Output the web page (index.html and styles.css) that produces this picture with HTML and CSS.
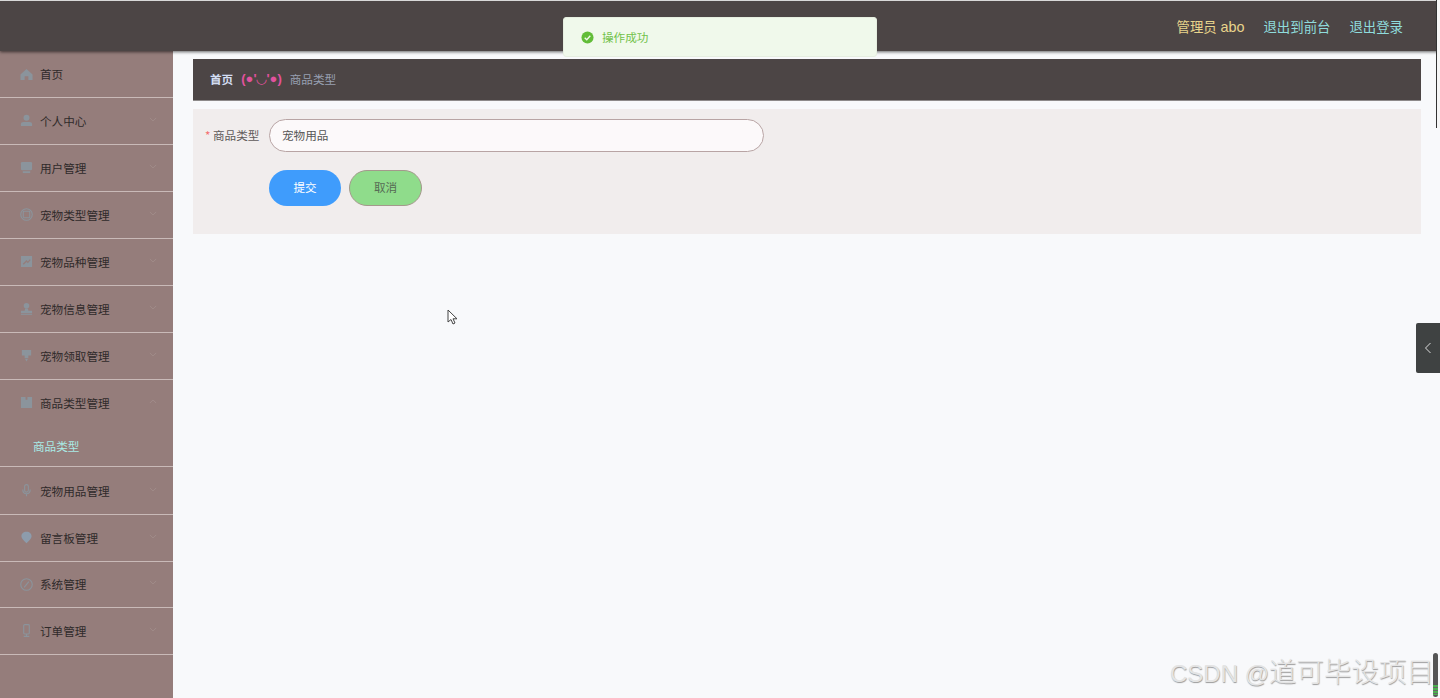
FILE: index.html
```html
<!DOCTYPE html>
<html lang="zh-CN">
<head>
    <meta charset="UTF-8" />
    <title>商品类型</title>
    <link rel="stylesheet" href="styles.css">
</head>
<body>

    <header class="topbar">
        <span class="admin">管理员 <b>abo</b></span>
        <a class="toplink">退出到前台</a>
        <a class="toplink">退出登录</a>
    </header>

    <div class="main">
        <nav class="sidebar">
            <div class="menu-item">
                <svg class="icon" viewBox="0 0 14 14"><path d="M7 1 L13.5 7 V13 H9 V9 H5 V13 H.5 V7 Z"/></svg>
                <span>首页</span>
            </div>
            <div class="menu-item">
                <svg class="icon" viewBox="0 0 14 14"><circle cx="7" cy="4" r="3.2"/><path d="M1 13 V11 Q1 8.500 4 8.500 H10 Q13 8.500 13 11 V13 Z"/></svg>
                <span>个人中心</span>
                <svg class="arrow" viewBox="0 0 10 6"><path d="M1 1 L5 5 L9 1"/></svg>
            </div>
            <div class="menu-item">
                <svg class="icon" viewBox="0 0 14 14"><rect x="1" y="1" width="12" height="9" rx="1.500"/><path d="M3 11 H11 V13 H3 Z"/></svg>
                <span>用户管理</span>
                <svg class="arrow" viewBox="0 0 10 6"><path d="M1 1 L5 5 L9 1"/></svg>
            </div>
            <div class="menu-item">
                <svg class="icon icon-line" viewBox="0 0 14 14"><circle cx="7" cy="7" r="6.200"/><rect x="3.500" y="3.500" width="7" height="7" rx="1"/></svg>
                <span>宠物类型管理</span>
                <svg class="arrow" viewBox="0 0 10 6"><path d="M1 1 L5 5 L9 1"/></svg>
            </div>
            <div class="menu-item">
                <svg class="icon" viewBox="0 0 14 14"><path d="M1 1 H13 V13 H1 Z M3 9.500 L4 10.500 L7 7.500 L8.500 9 L11.500 5.500 L10.500 4.500 L8.500 7 L7 5.500 Z" fill-rule="evenodd"/></svg>
                <span>宠物品种管理</span>
                <svg class="arrow" viewBox="0 0 10 6"><path d="M1 1 L5 5 L9 1"/></svg>
            </div>
            <div class="menu-item">
                <svg class="icon" viewBox="0 0 14 14"><circle cx="7" cy="4" r="3"/><path d="M5.500 7 H8.500 L9 9.500 H13 V12 H1 V9.500 H5 Z"/><path d="M1 12.800 H13 V13.800 H1 Z"/></svg>
                <span>宠物信息管理</span>
                <svg class="arrow" viewBox="0 0 10 6"><path d="M1 1 L5 5 L9 1"/></svg>
            </div>
            <div class="menu-item">
                <svg class="icon" viewBox="0 0 14 14"><path d="M2 1 H12 V7 H9 V10 H5 V7 H2 Z"/><path d="M5.500 10.800 H8.500 L7 13.500 Z"/></svg>
                <span>宠物领取管理</span>
                <svg class="arrow" viewBox="0 0 10 6"><path d="M1 1 L5 5 L9 1"/></svg>
            </div>
            <div class="menu-item">
                <svg class="icon" viewBox="0 0 14 14"><path d="M1 1 H6 V4 H8 V1 H13 V13 H1 Z"/></svg>
                <span>商品类型管理</span>
                <svg class="arrow" viewBox="0 0 10 6"><path d="M1 5 L5 1 L9 5"/></svg>
            </div>
            <div class="submenu">
                <span>商品类型</span>
            </div>
            <div class="menu-item">
                <svg class="icon icon-line" viewBox="0 0 14 14"><rect x="5" y=".7" width="4" height="8" rx="2"/><path d="M3 6 Q3 10.500 7 10.500 Q11 10.500 11 6 M7 10.500 V13.300"/></svg>
                <span>宠物用品管理</span>
                <svg class="arrow" viewBox="0 0 10 6"><path d="M1 1 L5 5 L9 1"/></svg>
            </div>
            <div class="menu-item">
                <svg class="icon icon-blue" viewBox="0 0 14 14"><path d="M7 .7 C10.500 .7 12.500 3 12.500 5.700 C12.500 8.500 9.500 10.500 7 13.300 C4.500 10.500 1.500 8.500 1.500 5.700 C1.500 3 3.500 .7 7 .7 Z"/></svg>
                <span>留言板管理</span>
                <svg class="arrow" viewBox="0 0 10 6"><path d="M1 1 L5 5 L9 1"/></svg>
            </div>
            <div class="menu-item">
                <svg class="icon icon-line" viewBox="0 0 14 14"><circle cx="7" cy="7" r="6.200"/><path d="M4.500 10 L9.500 4"/></svg>
                <span>系统管理</span>
                <svg class="arrow" viewBox="0 0 10 6"><path d="M1 1 L5 5 L9 1"/></svg>
            </div>
            <div class="menu-item">
                <svg class="icon icon-line" viewBox="0 0 14 14"><rect x="4" y=".7" width="6" height="10" rx="1"/><path d="M7 10.700 V13.300 M4 13.300 H10"/></svg>
                <span>订单管理</span>
                <svg class="arrow" viewBox="0 0 10 6"><path d="M1 1 L5 5 L9 1"/></svg>
            </div>
        </nav>

        <main class="content">
            <div class="breadcrumb">
                <span class="crumb-home">首页</span>
                <span class="crumb-sep">(●'◡'●)</span>
                <span class="crumb-page">商品类型</span>
            </div>
            <form class="panel">
                <div class="form-row">
                    <label class="form-label"><i>*</i> 商品类型</label>
                    <div class="form-input">宠物用品</div>
                </div>
                <div class="form-actions">
                    <button type="button" class="btn btn-submit">提交</button>
                    <button type="button" class="btn btn-cancel">取消</button>
                </div>
            </form>
        </main>
    </div>

    <!-- 提示 -->
    <div class="toast">
        <svg class="toast-icon" viewBox="0 0 14 14"><circle cx="7" cy="7" r="6.500"/><path d="M4 7.200 L6.200 9.300 L10 5.200"/></svg>
        <span>操作成功</span>
    </div>

    <div class="side-tab">
        <svg viewBox="0 0 8 12"><path d="M6.500 1 L1.500 6 L6.500 11"/></svg>
    </div>

    <svg class="cursor" viewBox="0 0 12 17"><path d="M1 1 V13 L4 10.500 L6 15 L8 14 L6 9.800 H10 Z"/></svg>

    <div class="watermark">CSDN @<span>道可毕设项目</span></div>
    <div class="page-scroll"></div>
    <div class="scroll-thumb"></div>

</body>
</html>
```

FILE: styles.css
```css
* {
    box-sizing: border-box;
    margin: 0;
    padding: 0;
}

html,
body {
    height: 698px;
    overflow: hidden;
}

body {
    display: flex;
    flex-direction: column;
    background: #f8f9fb;
    font-family: "Noto Sans CJK SC", "Liberation Sans", sans-serif;
    font-size: 11.6px;
    color: #555;
    border-top: 1px solid #d8d8d8;
}

.topbar {
    display: flex;
    align-items: center;
    justify-content: flex-end;
    gap: 19px;
    flex-shrink: 0;
    height: 50px;
    padding-right: 37px;
    background: #4c4545;
    box-shadow: 0 1px 3px #0009;
    font-size: 13.4px;
    position: relative;
    z-index: 2;
}

.admin {
    color: #e8d48c;
    font-family: "Liberation Sans", "Noto Sans CJK SC", sans-serif;
}

.admin b {
    font-size: 14.4px;
    font-weight: 400;
}

.toplink {
    color: #8fdcdc;
}

.main {
    display: flex;
    flex: 1;
    min-height: 0;
}

.sidebar {
    flex-shrink: 0;
    width: 173px;
    padding-top: 1px;
    background: #957d7b;
    color: #2f2a2a;
}

.menu-item {
    display: flex;
    align-items: center;
    height: 47px;
    padding: 0 0 1px 20px;
    border-bottom: 1px solid #c9bab8;
}

.menu-item span {
    margin-left: 7px;
    flex: 1;
}

.menu-item:first-child {
    height: 46px;
}

.menu-item:nth-child(8) {
    height: 46px;
    border-bottom: none;
}

.menu-item:nth-child(10) {
    height: 48px;
    padding-bottom: 0;
}

.menu-item:nth-child(12) {
    height: 46px;
}

.icon {
    width: 13px;
    height: 13px;
    flex-shrink: 0;
    fill: #8b949c;
}

.icon-line {
    fill: none;
    stroke: #8b949c;
    stroke-width: 1.2;
}

.icon-blue {
    fill: #8d9cac;
}

.arrow {
    width: 8px;
    height: 5px;
    margin-right: 16px;
    margin-top: -3px;
    fill: none;
    stroke: #a38f8d;
    stroke-width: 1;
}

.submenu {
    display: flex;
    align-items: center;
    height: 41px;
    padding-left: 33px;
    padding-bottom: 1px;
    border-bottom: 1px solid #c9bab8;
    color: #a9ebe6;
}

.content {
    flex: 1;
    padding: 8px 19px 0 20px;
}

.breadcrumb {
    display: flex;
    align-items: center;
    height: 42px;
    padding: 0 0 2px 17px;
    background: #4c4545;
    border-bottom: 1px solid #8d8a8a;
}

.crumb-home {
    color: #d3ddf2;
    font-weight: 700;
}

.crumb-sep {
    margin-left: 8px;
    color: #e2529e;
    font-family: "Liberation Sans", "DejaVu Sans", sans-serif;
    font-weight: 700;
    font-size: 13px;
}

.crumb-page {
    margin-left: 8px;
    color: #98a0b2;
}

.panel {
    height: 125px;
    margin-top: 8px;
    padding: 10px 0 0 12px;
    background: #f1eded;
}

.form-row {
    display: flex;
    align-items: center;
}

.form-label {
    width: 64px;
    padding-bottom: 2px;
    color: #5f5a5a;
}

.form-label i {
    color: #f56c6c;
    font-style: normal;
}

.form-input {
    width: 495px;
    height: 33px;
    line-height: 30px;
    padding-left: 12px;
    background: #fcf9fa;
    border: 1px solid #b8a4a4;
    border-radius: 17px;
}

.form-actions {
    display: flex;
    gap: 8px;
    margin: 18px 0 0 64px;
}

.btn {
    width: 72px;
    height: 36px;
    padding-bottom: 2px;
    border: 1px solid transparent;
    border-radius: 18px;
    font: inherit;
}

.btn-submit {
    background: #3f9cfc;
    color: #fff;
}

.btn-cancel {
    width: 73px;
    background: #8fdc8b;
    border-color: #a4998c;
    color: #566a54;
}

.toast {
    position: absolute;
    left: 563px;
    top: 17px;
    display: flex;
    align-items: center;
    gap: 8px;
    width: 314px;
    height: 40px;
    padding-left: 17px;
    background: #f0f9eb;
    border: 1px solid #e6efe0;
    border-radius: 3px;
    color: #72c24a;
    z-index: 3;
}

.toast-icon {
    width: 13px;
    height: 13px;
    fill: #62bd38;
    stroke: none;
}

.toast-icon path {
    fill: none;
    stroke: #f0f9eb;
    stroke-width: 1.500;
}

.side-tab {
    position: absolute;
    right: 0;
    top: 323px;
    display: flex;
    align-items: center;
    justify-content: center;
    width: 24px;
    height: 50px;
    background: #3f4242;
    border-radius: 2px 0 0 2px;
}

.side-tab svg {
    width: 8px;
    height: 12px;
    fill: none;
    stroke: #ddd;
    stroke-width: 1;
}

.cursor {
    position: absolute;
    left: 447px;
    top: 309px;
    width: 12px;
    height: 17px;
    fill: #fff;
    stroke: #444;
    stroke-width: 1;
}

.watermark {
    position: absolute;
    left: 1170px;
    top: 650px;
    white-space: nowrap;
    font-family: "Liberation Sans", "Noto Sans CJK SC", sans-serif;
    font-size: 24px;
    color: #e4e4e4;
    text-shadow: .5px .5px 1px #999;
}

.watermark span {
    font-size: 27.5px;
    font-weight: 300;
}

.page-scroll {
    position: absolute;
    left: 1436px;
    top: 0;
    width: 4px;
    height: 128px;
    background: #f6f6f6;
    border-left: 1px solid #333;
    z-index: 3;
}

.scroll-thumb {
    position: absolute;
    left: 1433px;
    top: 653px;
    width: 5px;
    height: 44px;
    border-radius: 3px;
    background: repeating-linear-gradient(#4caf50 0 2px, #666 2px 3px) 0 32px / 100% 10px no-repeat, #555;
}
```
